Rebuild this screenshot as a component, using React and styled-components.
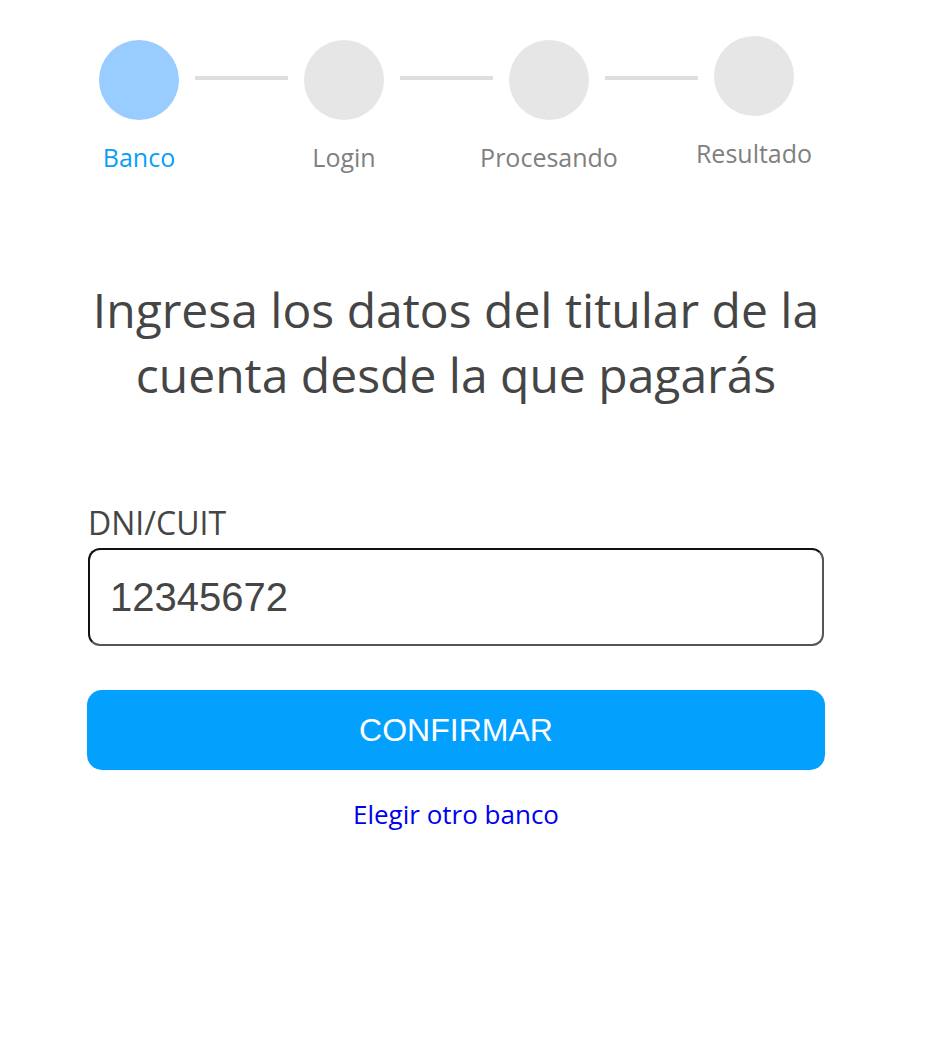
import React from 'react';
import styled, { createGlobalStyle } from 'styled-components';

const GlobalStyle = createGlobalStyle`
  html, body {
    margin: 0;
    padding: 0;
    background: #ffffff;
  }
  body {
    font-family: 'Open Sans', 'Noto Sans', sans-serif;
  }
`;

const Page = styled.div`
  width: 912px;
  display: flex;
  flex-direction: column;
  align-items: center;
`;

const Stepper = styled.div`
  align-self: flex-start;
  display: flex;
  align-items: flex-start;
  padding: 40px 0 0 99px;
`;

const Step = styled.div`
  width: 80px;
  display: flex;
  flex-direction: column;
  align-items: center;
  margin-top: ${(p) => (p.$raised ? '-4px' : '0')};
`;

const Circle = styled.div`
  width: 80px;
  height: 80px;
  border-radius: 50%;
  background: ${(p) => (p.$active ? '#99ccff' : '#e6e6e6')};
`;

const StepLabel = styled.div`
  margin-top: 20px;
  font-size: 25px;
  line-height: 34px;
  white-space: nowrap;
  color: ${(p) => (p.$active ? '#0a9ff5' : '#808080')};
`;

const Connector = styled.div`
  width: 93px;
  height: 4px;
  margin: 36px 16px 0;
  background: #dedede;
`;

const Title = styled.h1`
  margin: 103px 0 0;
  width: 760px;
  text-align: center;
  font-size: 48px;
  line-height: 65px;
  font-weight: 400;
  color: #454545;
`;

const Form = styled.form`
  margin-top: 94px;
  width: 736px;
  display: flex;
  flex-direction: column;
`;

const FieldLabel = styled.label`
  font-size: 32px;
  line-height: 43px;
  color: #454545;
`;

const Input = styled.input`
  box-sizing: border-box;
  margin-top: 4px;
  width: 100%;
  height: 98px;
  padding: 0 20px;
  border: 2px solid;
  border-color: #111 #555 #555 #111;
  border-radius: 12px;
  font-family: 'Liberation Sans', Arial, sans-serif;
  font-size: 40px;
  color: #454545;
  background: #fff;
  outline: none;
`;

const Button = styled.button`
  margin-top: 44px;
  width: 738px;
  margin-left: -1px;
  height: 80px;
  border: none;
  border-radius: 15px;
  background: #03a0fe;
  color: #ffffff;
  font-family: 'Liberation Sans', Arial, sans-serif;
  font-size: 32px;
  cursor: pointer;
`;

const Link = styled.a`
  margin-top: 27px;
  font-size: 26px;
  line-height: 35px;
  color: #0000ee;
  text-decoration: none;
  text-align: center;
  align-self: center;
`;

const steps = [
  { label: 'Banco', active: true },
  { label: 'Login' },
  { label: 'Procesando' },
  { label: 'Resultado', raised: true },
];

export default function App() {
  return (
    <>
      <GlobalStyle />
      <Page>
        <Stepper>
          {steps.map((s, i) => (
            <React.Fragment key={s.label}>
              {i > 0 && <Connector />}
              <Step $raised={s.raised}>
                <Circle $active={s.active} />
                <StepLabel $active={s.active}>{s.label}</StepLabel>
              </Step>
            </React.Fragment>
          ))}
        </Stepper>

        <Title>Ingresa los datos del titular de la cuenta desde la que pagarás</Title>

        <Form onSubmit={(e) => e.preventDefault()}>
          <FieldLabel htmlFor="dni">DNI/CUIT</FieldLabel>
          <Input id="dni" defaultValue="12345672" />
          <Button type="submit">CONFIRMAR</Button>
          <Link href="#">Elegir otro banco</Link>
        </Form>
      </Page>
    </>
  );
}
